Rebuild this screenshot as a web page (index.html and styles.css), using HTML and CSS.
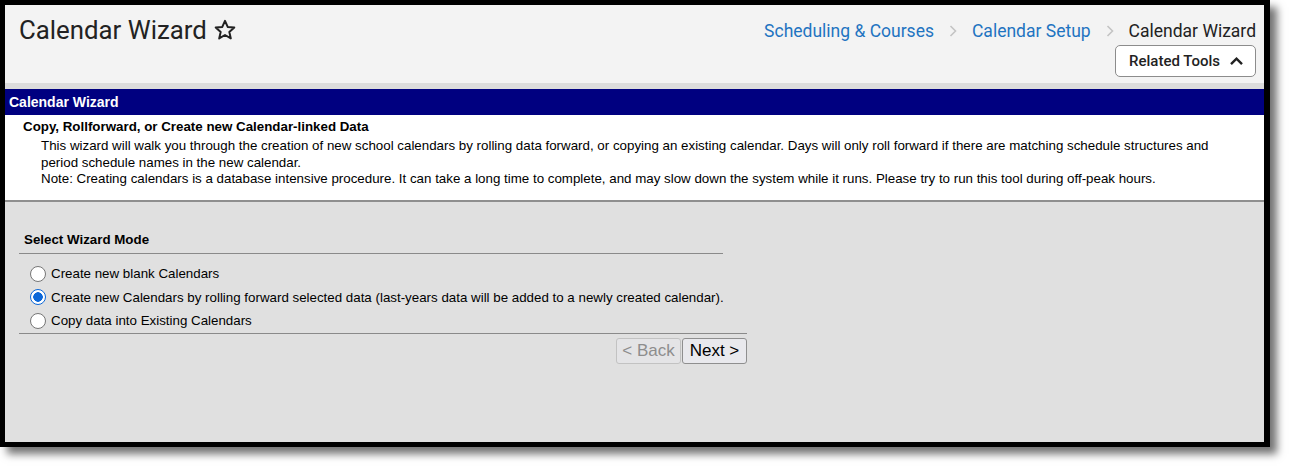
FILE: index.html
```html
<!DOCTYPE html>
<html lang="en">
<head>
<meta charset="utf-8">
<title>Calendar Wizard</title>
<link rel="stylesheet" href="styles.css">
</head>
<body>
<div class="frame">
  <header class="page-header">
    <div class="title-wrap">
      <h1 class="page-title">Calendar Wizard</h1>
      <svg class="star" width="24" height="24" viewBox="0 0 24 24" aria-hidden="true"><path d="M12 2.8l2.7 6.1 6.6.6-5 4.4 1.5 6.5L12 17l-5.8 3.4 1.5-6.5-5-4.4 6.6-.6z" fill="none" stroke="#222" stroke-width="2" stroke-linejoin="round"/></svg>
    </div>
    <div class="header-right">
      <nav class="crumbs">
        <a class="crumb-link">Scheduling &amp; Courses</a>
        <svg class="crumb-sep" width="10" height="14" viewBox="0 0 10 14" aria-hidden="true"><path d="M2.5 2l5 5-5 5" fill="none" stroke="#c4c4c4" stroke-width="1.6"/></svg>
        <a class="crumb-link">Calendar Setup</a>
        <svg class="crumb-sep" width="10" height="14" viewBox="0 0 10 14" aria-hidden="true"><path d="M2.5 2l5 5-5 5" fill="none" stroke="#c4c4c4" stroke-width="1.6"/></svg>
        <span class="crumb-current">Calendar Wizard</span>
      </nav>
      <button class="related-btn">Related Tools
        <svg width="15" height="10" viewBox="0 0 15 10" aria-hidden="true"><path d="M2 8.2l5.5-5.5 5.5 5.5" fill="none" stroke="#222" stroke-width="2.4"/></svg>
      </button>
    </div>
  </header>
  <div class="strip"></div>
  <div class="panel-bar">Calendar Wizard</div>
  <section class="intro">
    <div class="intro-title">Copy, Rollforward, or Create new Calendar-linked Data</div>
    <p class="intro-text">This wizard will walk you through the creation of new school calendars by rolling data forward, or copying an existing calendar. Days will only roll forward if there are matching schedule structures and period schedule names in the new calendar.</p>
    <p class="intro-text">Note: Creating calendars is a database intensive procedure. It can take a long time to complete, and may slow down the system while it runs. Please try to run this tool during off-peak hours.</p>
  </section>
  <main class="wizard">
    <div class="mode-head">Select Wizard Mode</div>
    <div class="mode-list">
      <label class="mode-row"><span class="radio"></span>Create new blank Calendars</label>
      <label class="mode-row"><span class="radio checked"></span>Create new Calendars by rolling forward selected data (last-years data will be added to a newly created calendar).</label>
      <label class="mode-row"><span class="radio"></span>Copy data into Existing Calendars</label>
    </div>
    <div class="nav-buttons">
      <button class="wiz-btn disabled">&lt; Back</button>
      <button class="wiz-btn">Next &gt;</button>
    </div>
  </main>
</div>
</body>
</html>
```
FILE: styles.css
```css
html, body {
  margin: 0;
  padding: 0;
  background: #ffffff;
}
body {
  width: 1294px;
  height: 472px;
  overflow: hidden;
  font-family: "Liberation Sans", Arial, sans-serif;
}
.frame {
  width: 1259px;
  height: 437px;
  border: 5px solid #000;
  border-right-width: 6px;
  box-shadow: 7px 7px 8px rgba(0, 0, 0, 0.55);
  display: flex;
  flex-direction: column;
  background: #e0e0e0;
}
.page-header {
  height: 78px;
  background: #f3f3f3;
  display: flex;
  justify-content: space-between;
  padding: 0 8px 0 14px;
  font-family: Roboto, "Liberation Sans", sans-serif;
}
.title-wrap {
  display: flex;
  align-items: flex-start;
  gap: 6px;
  padding-top: 10px;
}
.page-title {
  margin: 0;
  font-size: 25.8px;
  font-weight: 400;
  color: #222;
  line-height: 30px;
}
.star {
  margin-top: 3px;
}
.header-right {
  display: flex;
  flex-direction: column;
  align-items: flex-end;
  padding-top: 15px;
}
.crumbs {
  display: flex;
  align-items: center;
  gap: 14px;
  font-size: 17.5px;
  line-height: 22px;
}
.crumb-link {
  color: #1f74c1;
}
.crumb-current {
  color: #222;
}
.related-btn {
  margin-top: 3px;
  width: 141px;
  height: 32px;
  background: #fff;
  border: 1px solid #8c8c8c;
  border-radius: 5px;
  font-family: Roboto, "Liberation Sans", sans-serif;
  font-size: 15px;
  font-weight: 500;
  color: #222;
  display: flex;
  align-items: center;
  justify-content: center;
  gap: 9px;
  padding: 0 0 0 2px;
}
.strip {
  height: 6px;
  background: #dcdcdc;
}
.panel-bar {
  height: 26px;
  background: #000080;
  color: #fff;
  font-weight: 700;
  font-size: 14px;
  line-height: 26px;
  padding-left: 4px;
}
.intro {
  background: #fff;
  border-bottom: 2px solid #8f8f8f;
  padding: 4px 30px 0 18px;
  box-sizing: border-box;
  height: 87px;
  color: #000;
  font-size: 13.33px;
}
.intro-title {
  font-weight: 700;
  line-height: 16px;
}
.intro-text {
  margin: 0 0 0 18px;
  line-height: 16.5px;
}
.intro-title + .intro-text {
  margin-top: 3px;
}
.wizard {
  flex: 1;
  padding: 30px 0 0 14px;
  font-size: 13.33px;
  color: #000;
}
.mode-head {
  width: 699px;
  font-weight: 700;
  padding: 0 0 5px 5px;
  border-bottom: 1px solid #8a8a8a;
  line-height: 16px;
}
.mode-list {
  width: 728px;
  padding: 8px 0 0 0;
  border-bottom: 1px solid #8a8a8a;
}
.mode-row {
  display: flex;
  align-items: center;
  height: 23.5px;
  padding-left: 11px;
}
.radio {
  width: 14px;
  height: 14px;
  border: 1px solid #767676;
  border-radius: 50%;
  background: #fff;
  margin-right: 5px;
  box-sizing: content-box;
  flex: none;
}
.radio.checked {
  border-color: #0b67d8;
  background: radial-gradient(circle, #0b67d8 0 4.5px, #fff 5px 100%);
}
.nav-buttons {
  width: 728px;
  display: flex;
  justify-content: flex-end;
  padding-top: 4px;
  gap: 1px;
}
.wiz-btn {
  height: 26px;
  width: 65px;
  padding: 0;
  font-family: "Liberation Sans", Arial, sans-serif;
  font-size: 17px;
  color: #000;
  background: #e9e9ed;
  border: 1px solid #8f8f8f;
  border-radius: 3px;
}
.wiz-btn.disabled {
  color: #8d8d8d;
  border-color: #c2c2c2;
  background: #e4e4e6;
}
```
